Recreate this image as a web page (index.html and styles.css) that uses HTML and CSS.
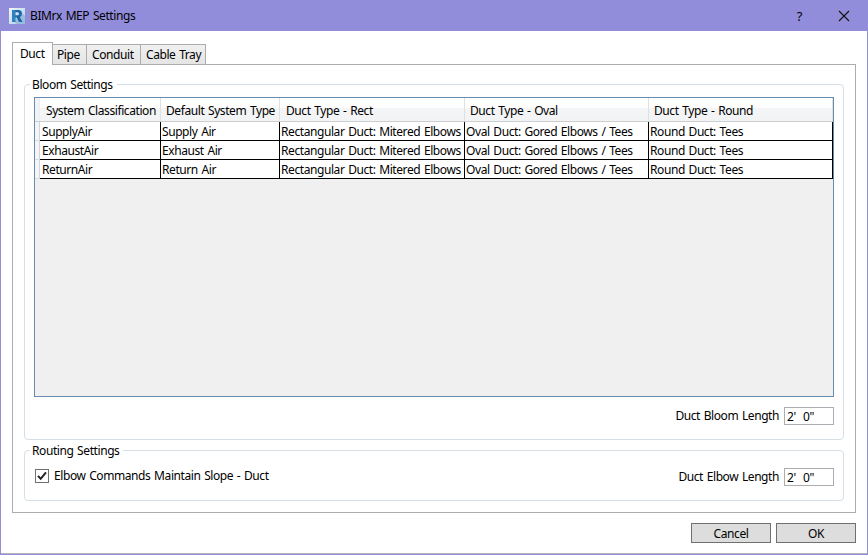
FILE: index.html
```
<!DOCTYPE html>
<html lang="en">
<head>
<meta charset="utf-8">
<title>BIMrx MEP Settings</title>
<link rel="stylesheet" href="styles.css">
</head>
<body>
<div class="window">
  <header class="titlebar">
    <svg class="logo" width="16" height="16" viewBox="0 0 16 16">
      <defs><linearGradient id="g" x1="0" y1="0" x2="1" y2="1"><stop offset="0" stop-color="#f2f6fb"/><stop offset="1" stop-color="#a9c9e6"/></linearGradient></defs>
      <rect width="16" height="16" fill="url(#g)"/>
      <path d="M5 13.5 13 5l3 3v8H8z" fill="#9bbddd"/>
      <path fill-rule="evenodd" d="M3 2h6.5Q13 2 13 5.5 13 8.2 10.800 9L13.500 14h-3.400L7.700 9.500H6.300V14H3zM6.300 4.300v3h2.400q1.300 0 1.300-1.500T8.700 4.300z" fill="#1d68a8"/>
      <path d="M3 2h3.300v12H3z" fill="#2f83bd"/>
    </svg>
    <span class="title">BIMrx MEP Settings</span>
    <span class="help">?</span>
    <svg class="close" width="12" height="12" viewBox="0 0 12 12"><path d="M1 1l10 10M11 1 1 11" stroke="#111" stroke-width="1.100" fill="none"/></svg>
  </header>
  <main class="content">
    <nav class="tabs">
      <div class="tab active"><span>Duct</span></div>
      <div class="tab pipe"><span>Pipe</span></div>
      <div class="tab conduit"><span>Conduit</span></div>
      <div class="tab tray"><span>Cable Tray</span></div>
    </nav>
    <section class="panel">
      <div class="group bloom">
        <div class="legend"><span>Bloom Settings</span></div>
        <div class="datagrid">
          <div class="row head"><i></i><b>System Classification</b><b class="near">Default System Type</b><b>Duct Type - Rect</b><b class="near">Duct Type - Oval</b><b class="near">Duct Type - Round</b></div>
          <div class="row"><i></i><span>SupplyAir</span><span>Supply Air</span><span>Rectangular Duct: Mitered Elbows</span><span>Oval Duct: Gored Elbows / Tees</span><span>Round Duct: Tees</span></div>
          <div class="row"><i></i><span>ExhaustAir</span><span>Exhaust Air</span><span>Rectangular Duct: Mitered Elbows</span><span>Oval Duct: Gored Elbows / Tees</span><span>Round Duct: Tees</span></div>
          <div class="row"><i></i><span>ReturnAir</span><span>Return Air</span><span>Rectangular Duct: Mitered Elbows</span><span>Oval Duct: Gored Elbows / Tees</span><span>Round Duct: Tees</span></div>
        </div>
        <div class="field"><span>Duct Bloom Length</span><div class="input">2'&nbsp; 0"</div></div>
      </div>
      <div class="group routing">
        <div class="legend"><span>Routing Settings</span></div>
        <div class="options">
          <div class="check">
            <svg width="14" height="14" viewBox="0 0 14 14"><rect x=".5" y=".5" width="13" height="13" fill="#fff" stroke="#707070"/><path d="M3 6.800 5.700 9.800 11 3.300" fill="none" stroke="#212121" stroke-width="2"/></svg>
            <span>Elbow Commands Maintain Slope - Duct</span>
          </div>
          <div class="field"><span>Duct Elbow Length</span><div class="input">2'&nbsp; 0"</div></div>
        </div>
      </div>
    </section>
    <footer class="actions"><div class="button">Cancel</div><div class="button">OK</div></footer>
  </main>
</div>
</body>
</html>
```
FILE: styles.css
```
* { box-sizing: border-box; }
body { margin: 0; font: 12px/16px "Noto Sans", "Open Sans", sans-serif; letter-spacing: -0.42px; word-spacing: 1px; color: #000; white-space: nowrap; }
.window { width: 868px; height: 555px; border: 1px solid #918ddb; background: #fff; display: flex; flex-direction: column; }
.titlebar { height: 30px; flex: none; background: #918ddb; display: flex; align-items: center; padding: 0 17px 0 8px; }
.title { margin-left: 5px; flex: 1; }
.help { font-size: 13px; margin-right: 36px; }
.content { flex: 1; padding: 11px 11px 0; border-bottom: 1px solid #b4b4b4; }
.tabs { display: flex; align-items: flex-end; height: 23px; }
.tab { height: 21px; margin-left: -1px; border: 1px solid #acacac; background: linear-gradient(#f0f0f0, #e5e5e5); padding: 2px 0 0 5px; }
.tab.active { width: 41px; height: 23px; margin: 0; padding: 3px 0 0 7px; background: #fff; border-bottom: 0; z-index: 1; }
.pipe { width: 35px; padding-left: 4px; }
.conduit { width: 55px; }
.tray { width: 66px; }
.panel { height: 449px; margin-top: -1px; border: 1px solid #acacac; padding: 19px 11px 0; }
.group { border: 1px solid #d5dfe5; border-radius: 4px; padding: 0 9px; }
.bloom { height: 356px; }
.routing { height: 51px; margin-top: 10px; }
.legend { display: flex; align-items: flex-start; height: 12px; margin-left: -4px; }
.legend span { height: 16px; margin-top: -8px; padding: 0 4px 0 2px; background: #fff; }
.datagrid { height: 300px; border: 1px solid #688caf; background: #f0f0f0; }
.row { height: 19px; display: grid; grid-template-columns: 5px 121px 119px 185px 184px 184px; }
.row i { background: #f4f5f6; border-right: 1px solid #d5d5d5; border-bottom: 1px solid #ddd; }
.row > span { background: #fff; border-right: 1px solid #000; border-bottom: 1px solid #000; padding: 1px 0 0 2px; line-height: 17px; }
.row > span + span { padding-left: 1px; }
.head { height: 24px; background: linear-gradient(#fff 40%, #f4f5f6 45%, #f2f3f4); border-bottom: 1px solid #ccced0; }
.head i { background: #f2f3f4; border-bottom: 0; border-color: #eee; }
.head b { font-weight: 400; padding: 5px 0 0 6px; border-right: 1px solid #dfe0e1; }
.head b.near { padding-left: 5px; }
.field { display: flex; justify-content: flex-end; align-items: center; gap: 5px; }
.bloom .field { margin-top: 10px; }
.input { width: 50px; height: 18px; border: 1px solid #abadb3; padding: 1px 0 0 2px; line-height: 15px; }
.options { display: flex; justify-content: space-between; padding-top: 5px; }
.check { display: flex; align-items: center; gap: 5px; height: 16px; padding-left: 1px; }
.check + .field { height: 18px; }
.actions { display: flex; justify-content: flex-end; gap: 5px; margin-top: 10px; }
.button { width: 80px; height: 20px; border: 1px solid #707070; background: #ddd; text-align: center; line-height: 19px; }
```
